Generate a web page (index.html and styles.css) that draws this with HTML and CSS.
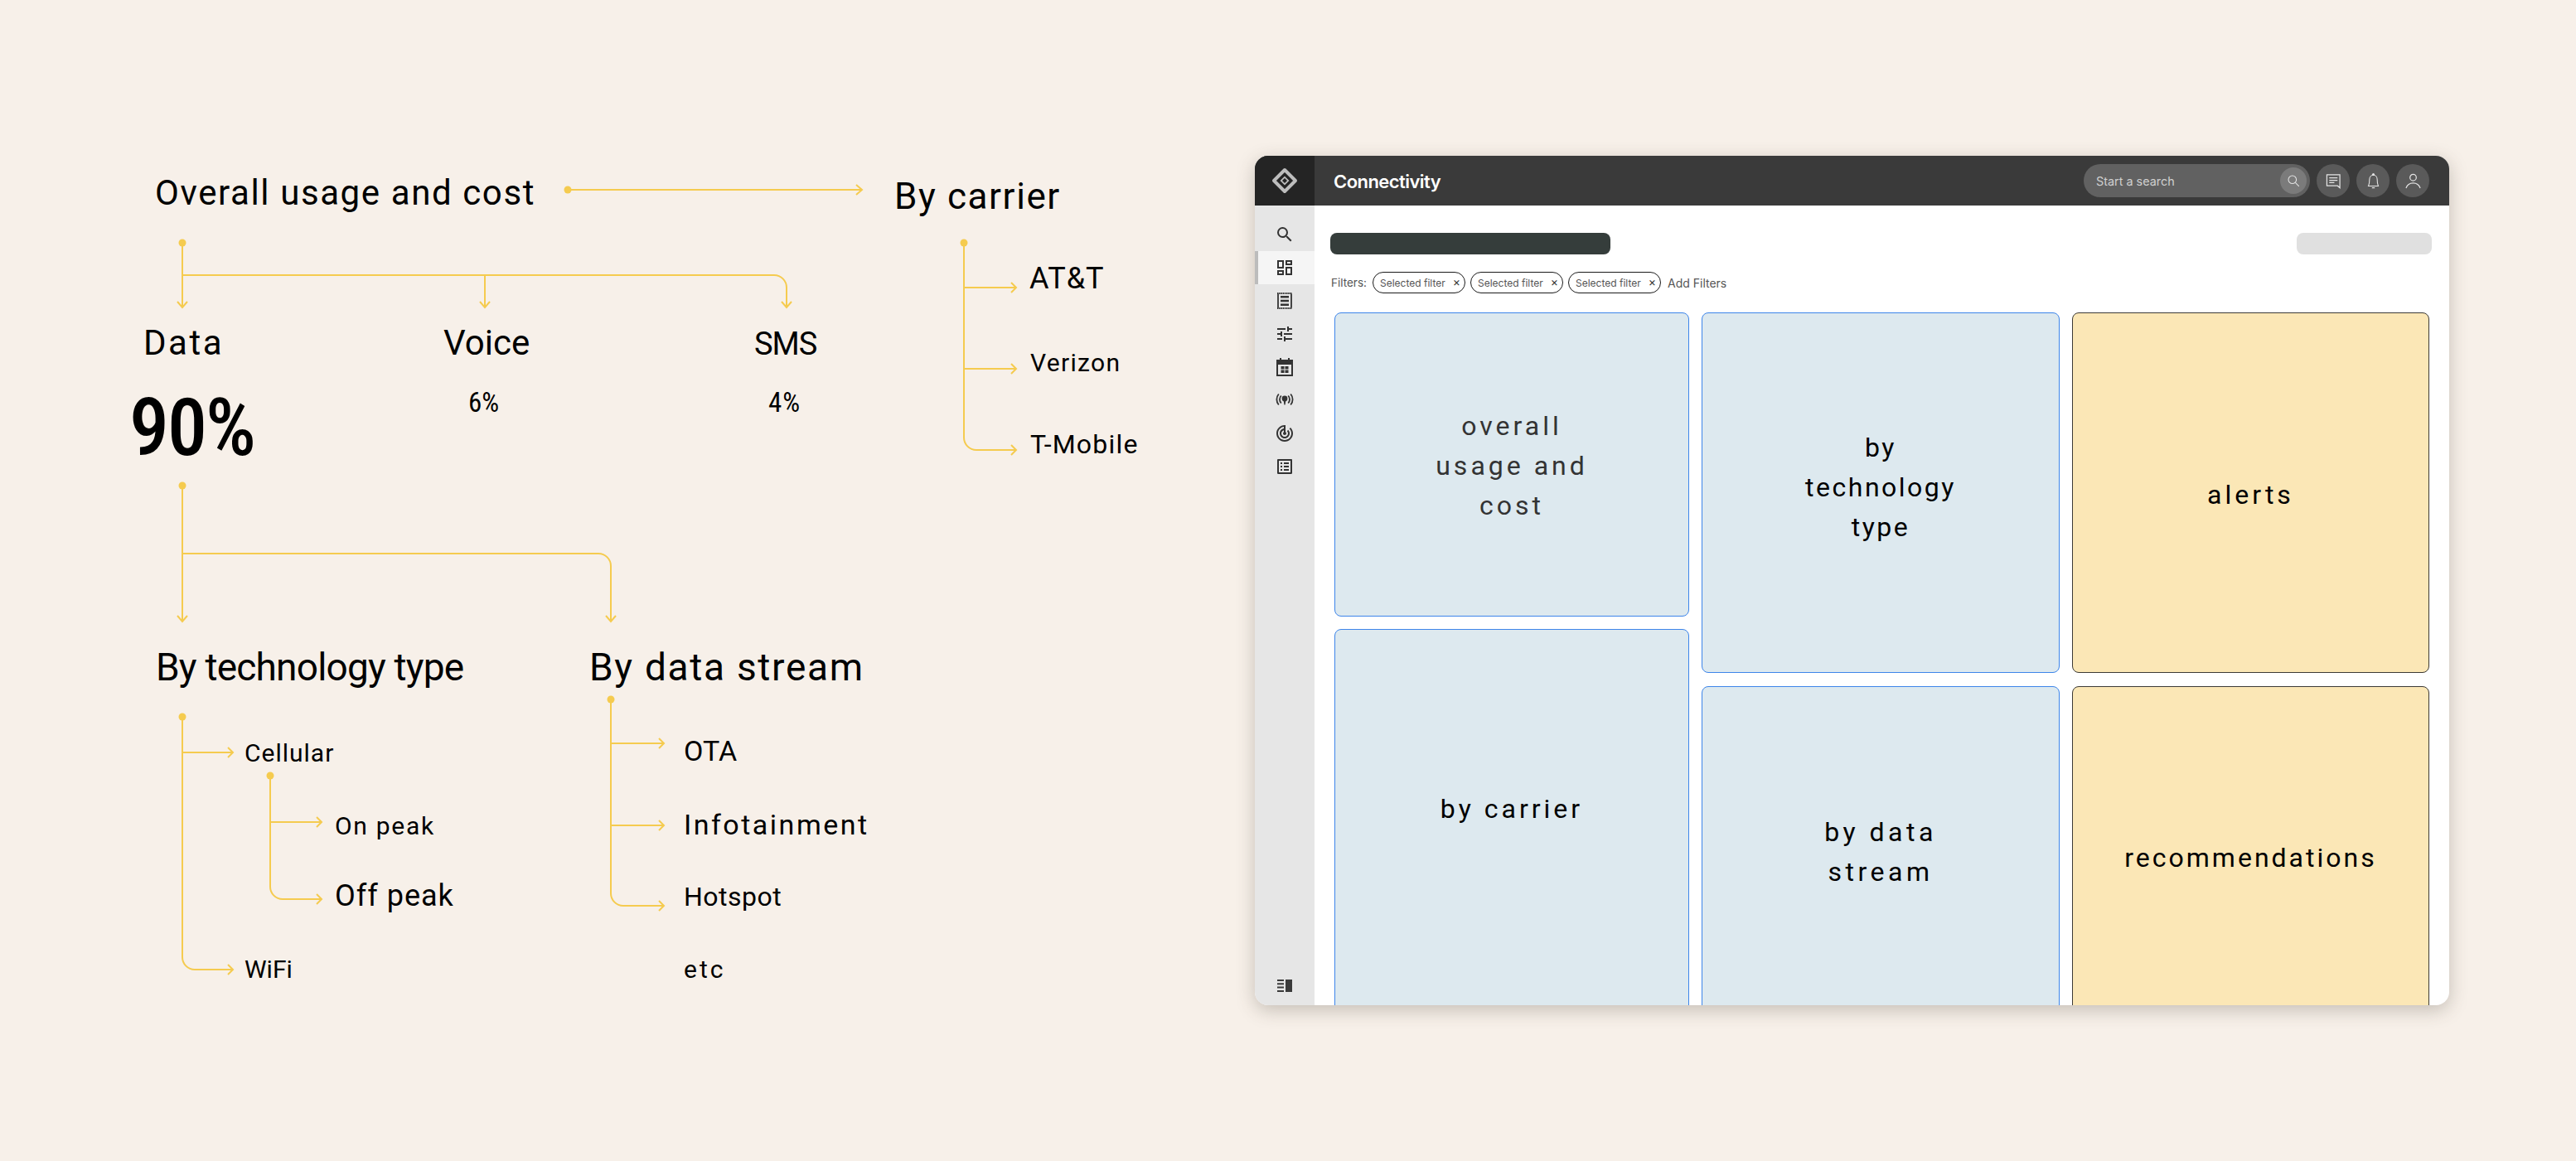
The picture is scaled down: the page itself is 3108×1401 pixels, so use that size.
FILE: index.html
```html
<!doctype html>
<html lang="en">
<head>
<meta charset="utf-8">
<title>Connectivity</title>
<link rel="stylesheet" href="styles.css">
</head>
<body>
<div class="page">
  <section class="diagram">
    <svg class="wires" viewBox="0 0 3108 1401" width="3108" height="1401" aria-hidden="true">
      <g class="dots">
        <circle cx="685" cy="229" r="4.5"/><circle cx="220" cy="293" r="4.5"/><circle cx="220" cy="586" r="4.5"/>
        <circle cx="1163" cy="293" r="4.5"/><circle cx="220" cy="865" r="4.5"/><circle cx="326" cy="936" r="4.5"/><circle cx="737" cy="844" r="4.5"/>
      </g>
      <g class="lines">
        <path d="M685 229H1040M1033 223l7 6-7 6"/>
        <path d="M220 293V371M214 364l6 7 6-7"/>
        <path d="M220 332H934a15 15 0 0 1 15 15V371M943 364l6 7 6-7"/>
        <path d="M585 332V371M579 364l6 7 6-7"/>
        <path d="M220 586V750M214 743l6 7 6-7"/>
        <path d="M220 668H722a15 15 0 0 1 15 15V750M731 743l6 7 6-7"/>
        <path d="M1163 293V528a15 15 0 0 0 15 15H1226M1220 537l6 6-6 6"/>
        <path d="M1163 347H1226M1220 341l6 6-6 6"/>
        <path d="M1163 445H1226M1220 439l6 6-6 6"/>
        <path d="M220 865V1155a15 15 0 0 0 15 15H281M275 1164l6 6-6 6"/>
        <path d="M220 908H281M275 902l6 6-6 6"/>
        <path d="M326 936V1070a15 15 0 0 0 15 15H388M382 1079l6 6-6 6"/>
        <path d="M326 992H388M382 986l6 6-6 6"/>
        <path d="M737 844V1078a15 15 0 0 0 15 15H801M795 1087l6 6-6 6"/>
        <path d="M737 897H801M795 891l6 6-6 6"/>
        <path d="M737 996H801M795 990l6 6-6 6"/>
      </g>
    </svg>
    <span class="node n-overall">Overall usage and cost</span>
    <span class="node n-carrier">By carrier</span>
    <span class="node n-data">Data</span>
    <span class="node n-voice">Voice</span>
    <span class="node n-sms">SMS</span>
    <span class="node n-90">90%</span>
    <span class="node n-6">6%</span>
    <span class="node n-4">4%</span>
    <span class="node n-att">AT&amp;T</span>
    <span class="node n-verizon">Verizon</span>
    <span class="node n-tmobile">T-Mobile</span>
    <span class="node n-tech">By technology type</span>
    <span class="node n-stream">By data stream</span>
    <span class="node n-cellular">Cellular</span>
    <span class="node n-on">On peak</span>
    <span class="node n-off">Off peak</span>
    <span class="node n-wifi">WiFi</span>
    <span class="node n-ota">OTA</span>
    <span class="node n-info">Infotainment</span>
    <span class="node n-hotspot">Hotspot</span>
    <span class="node n-etc">etc</span>
  </section>

  <section class="window">
    <header class="topbar">
      <div class="logo-cell">
        <svg class="logo" viewBox="-15 -15 30 30" aria-hidden="true">
          <path class="logo-outer" d="M0-13 13 0 0 13-13 0Z"/>
          <path class="logo-inner" d="M0-6.5 6.5 0 0 6.500-6.500 0Z"/>
          <path class="logo-core" d="M0-3 3 0 0 3-3 0Z"/>
        </svg>
      </div>
      <h1 class="app-title">Connectivity</h1>
      <div class="actions">
        <div class="search-pill">
          <span class="search-text">Start a search</span>
          <span class="search-btn">
            <svg class="hicon" viewBox="0 0 20 20" aria-hidden="true"><circle cx="8.500" cy="8.500" r="6"/><path d="M13 13 18.500 18.500"/></svg>
          </span>
        </div>
        <span class="round-btn">
          <svg class="hicon" viewBox="0 0 20 20" aria-hidden="true"><path d="M1.500 2H18V18.500L15 16H1.500Z"/><path d="M4.500 6H15M4.500 9H15M4.500 12H11"/></svg>
        </span>
        <span class="round-btn">
          <svg class="hicon bell" viewBox="0 0 20 24" aria-hidden="true"><path d="M3 19C4.500 16 4.500 13 4.500 10 4.500 6 7 3.500 10 3.500S15.500 6 15.500 10C15.500 13 15.500 16 17 19Z"/><circle class="solid" cx="10" cy="2.500" r="1.800"/><path d="M8 21.500H12"/></svg>
        </span>
        <span class="round-btn">
          <svg class="hicon" viewBox="0 0 20 20" aria-hidden="true"><circle cx="10" cy="5.500" r="4"/><path d="M1 19C2.500 14.500 6 12.500 10 12.500S17.500 14.500 19 19"/></svg>
        </span>
      </div>
    </header>
    <div class="content">
      <nav class="sidebar">
        <span class="nav-item"><svg viewBox="0 0 24 24" aria-hidden="true"><path d="M15.500 14h-.79l-.28-.27A6.470 6.470 0 0 0 16 9.500 6.500 6.500 0 1 0 9.500 16c1.610 0 3.090-.59 4.230-1.570l.27.28v.79l5 4.990L20.490 19l-4.990-5zm-6 0C7.010 14 5 11.990 5 9.500S7.010 5 9.500 5 14 7.010 14 9.500 11.990 14 9.500 14z"/></svg></span>
        <span class="nav-item is-active"><svg viewBox="0 0 24 24" aria-hidden="true"><path d="M19 5v2h-4V5h4M9 5v6H5V5h4m10 8v6h-4v-6h4M9 17v2H5v-2h4M21 3h-8v6h8V3zM11 3H3v10h8V3zm10 8h-8v10h8V11zm-10 4H3v6h8v-6z"/></svg></span>
        <span class="nav-item"><svg viewBox="0 0 24 24" aria-hidden="true"><path class="arc" d="M4 3.500V20.500M20 3.500V20.500"/><path class="arc dashed" d="M3 3H21M3 21H21"/><path d="M7 6h10v2.400H7zM7 10.800h10v2.400H7zM7 15.600h10v2.400H7z"/></svg></span>
        <span class="nav-item"><svg viewBox="0 0 24 24" aria-hidden="true"><path d="M3 17v2h6v-2H3zM3 5v2h10V5H3zm10 16v-2h8v-2h-8v-2h-2v6h2zM7 9v2H3v2h4v2h2V9H7zm14 4v-2H11v2h10zm-6-4h2V7h4V5h-4V3h-2v6z"/></svg></span>
        <span class="nav-item"><svg viewBox="0 0 24 24" aria-hidden="true"><path d="M6 1h2v2h8V1h2v2h4v20H2V3h4zM4 9v12h16V9zM7.500 11h4v3.500h-4zM12.500 11h4v3.500h-4zM7.500 15.500h4V19h-4zM12.500 15.500h4V19h-4z" fill-rule="evenodd"/></svg></span>
        <span class="nav-item"><svg viewBox="0 0 24 24" aria-hidden="true"><circle cx="12" cy="10" r="3.400"/><path d="M10.800 13h2.400l-.6 4.500h-1.200z"/><path class="arc" d="M7.800 6.500a6.500 6.500 0 0 0 0 9M16.200 6.500a6.500 6.500 0 0 1 0 9M4.800 4.500a10 10 0 0 0 0 13M19.200 4.500a10 10 0 0 1 0 13"/></svg></span>
        <span class="nav-item"><svg viewBox="0 0 24 24" aria-hidden="true"><path d="M19.070 4.930l-1.410 1.410C19.100 7.790 20 9.790 20 12c0 4.420-3.580 8-8 8s-8-3.580-8-8c0-4.080 3.050-7.440 7-7.930v2.020C8.160 6.570 6 9.030 6 12c0 3.310 2.690 6 6 6s6-2.690 6-6c0-1.660-.67-3.160-1.760-4.240l-1.410 1.410C15.550 9.900 16 10.900 16 12c0 2.210-1.790 4-4 4s-4-1.790-4-4c0-1.860 1.280-3.410 3-3.860v2.140c-.6.350-1 .98-1 1.720 0 1.100.9 2 2 2s2-.9 2-2c0-.74-.4-1.380-1-1.720V2h-1C6.480 2 2 6.480 2 12s4.480 10 10 10 10-4.480 10-10c0-2.760-1.120-5.260-2.930-7.070z"/></svg></span>
        <span class="nav-item"><svg viewBox="0 0 24 24" aria-hidden="true"><path d="M19 5v14H5V5h14m1.100-2H3.900c-.5 0-.9.4-.9.9v16.200c0 .4.4.9.9.9h16.200c.4 0 .9-.5.9-.9V3.900c0-.5-.5-.9-.9-.9zM11 7h6v2h-6V7zm0 4h6v2h-6v-2zm0 4h6v2h-6zM7 7h2v2H7zm0 4h2v2H7zm0 4h2v2H7z"/></svg></span>
        <span class="collapse"><svg viewBox="0 0 18 15" aria-hidden="true"><path d="M0 0h8v2H0zM0 4.300h8v2H0zM0 8.600h8v2H0zM0 13h8v2H0zM10 0h8v15h-8z"/></svg></span>
      </nav>
      <main class="main">
        <div class="title-row">
          <div class="title-bar"></div>
          <div class="title-side"></div>
        </div>
        <div class="filters">
          <span class="filters-label">Filters:</span>
          <span class="chip">Selected filter<i class="chip-x">×</i></span>
          <span class="chip">Selected filter<i class="chip-x">×</i></span>
          <span class="chip">Selected filter<i class="chip-x">×</i></span>
          <span class="add-filters">Add Filters</span>
        </div>
        <div class="board">
          <div class="board-col">
            <article class="card blue c-usage"><span class="card-text muted ls-4">overall<br>usage and<br>cost</span></article>
            <article class="card blue c-carrier"><span class="card-text ls-4">by carrier</span></article>
          </div>
          <div class="board-col">
            <article class="card blue c-tech"><span class="card-text ls-25">by<br>technology<br>type</span></article>
            <article class="card blue c-stream"><span class="card-text ls-45">by data<br>stream</span></article>
          </div>
          <div class="board-col">
            <article class="card amber c-alerts"><span class="card-text ls-4">alerts</span></article>
            <article class="card amber c-recs"><span class="card-text ls-3">recommendations</span></article>
          </div>
        </div>
      </main>
    </div>
  </section>
</div>
</body>
</html>
```
FILE: styles.css
```css
* { box-sizing: border-box; }
html, body { margin: 0; padding: 0; }
body { background: #f7f0e9; font-family: Inter, "Liberation Sans", sans-serif; }

.page {
  position: relative;
  width: 3108px;
  height: 1401px;
  overflow: hidden;
  display: flex;
  justify-content: flex-end;
  align-items: flex-start;
  padding: 188px 153px 0 0;
}

/* Free-canvas flow diagram */
.diagram { position: absolute; inset: 0; }
.wires { position: absolute; left: 0; top: 0; }
.dots { fill: #f5cb4f; }
.lines { fill: none; stroke: #f5cb4f; stroke-width: 2; }

.node {
  position: absolute;
  font-family: Roboto, "Liberation Sans", sans-serif;
  line-height: 1;
  white-space: nowrap;
  color: #000;
}
.n-overall { left: 187px; top: 212px; font-size: 42px; letter-spacing: 1.6px; }
.n-carrier { left: 1079px; top: 215px; font-size: 44px; letter-spacing: 1.6px; }
.n-data { left: 173px; top: 393px; font-size: 42px; letter-spacing: 2.5px; }
.n-voice { left: 535px; top: 393px; font-size: 42px; }
.n-sms { left: 910px; top: 396px; font-size: 38px; letter-spacing: -1px; }
.n-90 { left: 156px; top: 468px; font-family: "Roboto Condensed", Roboto, sans-serif; font-size: 96px; font-weight: 500; letter-spacing: -2px; }
.n-6 { left: 565px; top: 469px; font-family: "Roboto Condensed", Roboto, sans-serif; font-size: 33px; }
.n-4 { left: 927px; top: 469px; font-family: "Roboto Condensed", Roboto, sans-serif; font-size: 33px; letter-spacing: 1px; }
.n-att { left: 1242px; top: 318px; font-size: 36px; letter-spacing: 1px; }
.n-verizon { left: 1243px; top: 423px; font-size: 30px; letter-spacing: 1.3px; }
.n-tmobile { left: 1243px; top: 520px; font-size: 32px; letter-spacing: 1.2px; }
.n-tech { left: 188px; top: 782px; font-size: 46px; letter-spacing: -.8px; }
.n-stream { left: 711px; top: 782px; font-size: 46px; letter-spacing: 1.7px; }
.n-cellular { left: 295px; top: 894px; font-size: 30px; letter-spacing: 1px; }
.n-on { left: 404px; top: 982px; font-size: 30px; letter-spacing: 1.7px; }
.n-off { left: 404px; top: 1063px; font-size: 36px; letter-spacing: 1px; }
.n-wifi { left: 295px; top: 1155px; font-size: 30px; }
.n-ota { left: 825px; top: 889px; font-size: 34px; }
.n-info { left: 825px; top: 978px; font-size: 34px; letter-spacing: 2.5px; }
.n-hotspot { left: 825px; top: 1066px; font-size: 32px; letter-spacing: .5px; }
.n-etc { left: 825px; top: 1155px; font-size: 30px; letter-spacing: 3px; }

/* App window */
.window {
  position: relative;
  width: 1441px;
  height: 1025px;
  border-radius: 16px;
  overflow: hidden;
  background: #fff;
  display: flex;
  flex-direction: column;
  box-shadow: 0 6px 22px rgba(70, 60, 50, .28);
}
.topbar {
  flex: 0 0 60px;
  display: flex;
  align-items: center;
  background: #3a3a3a;
  padding-right: 24px;
}
.logo-cell {
  width: 72px;
  height: 60px;
  background: #242424;
  display: flex;
  align-items: center;
  justify-content: center;
}
.logo { width: 30px; height: 30px; overflow: visible; }
.logo-outer { fill: none; stroke: #bdbdbd; stroke-width: 4; stroke-linejoin: round; }
.logo-inner { fill: #bdbdbd; stroke: #242424; stroke-width: 1.500; stroke-linejoin: round; }
.logo-core { fill: #242424; }
.app-title {
  margin: 2px 0 0 23px;
  font-size: 22px;
  font-weight: 600;
  letter-spacing: -.55px;
  color: #fff;
}
.actions { margin-left: auto; display: flex; align-items: center; gap: 8px; }
.search-pill {
  width: 273px;
  height: 40px;
  border-radius: 20px;
  background: #616161;
  display: flex;
  align-items: center;
  justify-content: space-between;
  padding: 0 4px 0 15px;
}
.search-text { font-size: 14.400px; color: #cfcfcf; }
.search-btn, .round-btn { display: flex; align-items: center; justify-content: center; border-radius: 50%; }
.search-btn { width: 32px; height: 32px; background: #7b7b7b; }
.search-btn .hicon { width: 16px; height: 16px; }
.round-btn { width: 40px; height: 40px; background: #5a5a5a; }
.hicon { width: 19px; height: 19px; fill: none; stroke: #e4e4e4; stroke-width: 1.300; }
.hicon.bell { width: 17px; height: 21px; }
.hicon .solid { fill: #e4e4e4; stroke: none; }

.content { flex: 1; min-height: 0; display: flex; }
.sidebar {
  flex: 0 0 72px;
  background: #e6e6e6;
  display: flex;
  flex-direction: column;
  padding: 15px 0 16px;
}
.nav-item {
  height: 40px;
  display: flex;
  align-items: center;
  justify-content: center;
  color: #333;
}
.nav-item svg { width: 24px; height: 24px; fill: #333; }
.nav-item .arc { fill: none; stroke: #333; stroke-width: 1.800; }
.nav-item .dashed { stroke-width: 2; stroke-dasharray: 1.500 .7; }
.nav-item.is-active { background: #f5f5f5; box-shadow: inset 4px 0 0 #bcbcbc; }
.collapse { margin-top: auto; display: flex; justify-content: center; }
.collapse svg { width: 18px; height: 15px; fill: #3a3a3a; }

.main { flex: 1; min-width: 0; padding: 33px 21px 0 19px; overflow: hidden; }
.title-row { display: flex; justify-content: space-between; }
.title-bar { width: 338px; height: 26px; border-radius: 8px; background: #353d3b; }
.title-side { width: 163px; height: 26px; border-radius: 8px; background: #e0e0e0; }

.filters { margin: 21px 0 23px 1px; display: flex; align-items: center; height: 26px; font-size: 13.500px; color: #555; }
.filters-label { width: 50px; }
.chip {
  width: 112px;
  height: 26px;
  margin-right: 6px;
  border: 1.500px solid #1a1a1a;
  border-radius: 13px;
  display: flex;
  align-items: center;
  justify-content: space-between;
  padding: 0 5px 0 8px;
  font-size: 12px;
  white-space: nowrap;
}
.chip-x { font-style: normal; font-size: 14px; line-height: 1; margin-top: -3px; color: #333; }
.add-filters { margin-left: 2px; font-size: 14px; }

.board {
  margin-left: 5px;
  display: grid;
  grid-template-columns: 428px 432px 431px;
  column-gap: 15px;
  align-items: start;
}
.board-col { display: flex; flex-direction: column; gap: 16px; }
.card {
  display: flex;
  align-items: center;
  justify-content: center;
  text-align: center;
  border-radius: 8px;
  border: 1.500px solid;
}
.blue { background: #dde9ef; border-color: #3d85ea; }
.amber { background: #fbe7b6; border-color: #3c3a36; }
.card-text {
  font-family: Roboto, "Liberation Sans", sans-serif;
  font-size: 32px;
  line-height: 48px;
  color: #000;
}
.muted { color: #333; }
.ls-25 { letter-spacing: 2.5px; }
.ls-3 { letter-spacing: 3px; }
.ls-4 { letter-spacing: 4px; }
.ls-45 { letter-spacing: 4.5px; }

.c-usage { height: 367px; padding-top: 3px; }
.c-carrier { height: 500px; padding-bottom: 66px; margin-top: -1px; }
.c-tech { height: 435px; padding-bottom: 13px; }
.c-stream { height: 500px; padding-bottom: 101px; }
.c-alerts { height: 435px; padding-top: 5px; }
.c-recs { height: 500px; padding-bottom: 86px; }
```
